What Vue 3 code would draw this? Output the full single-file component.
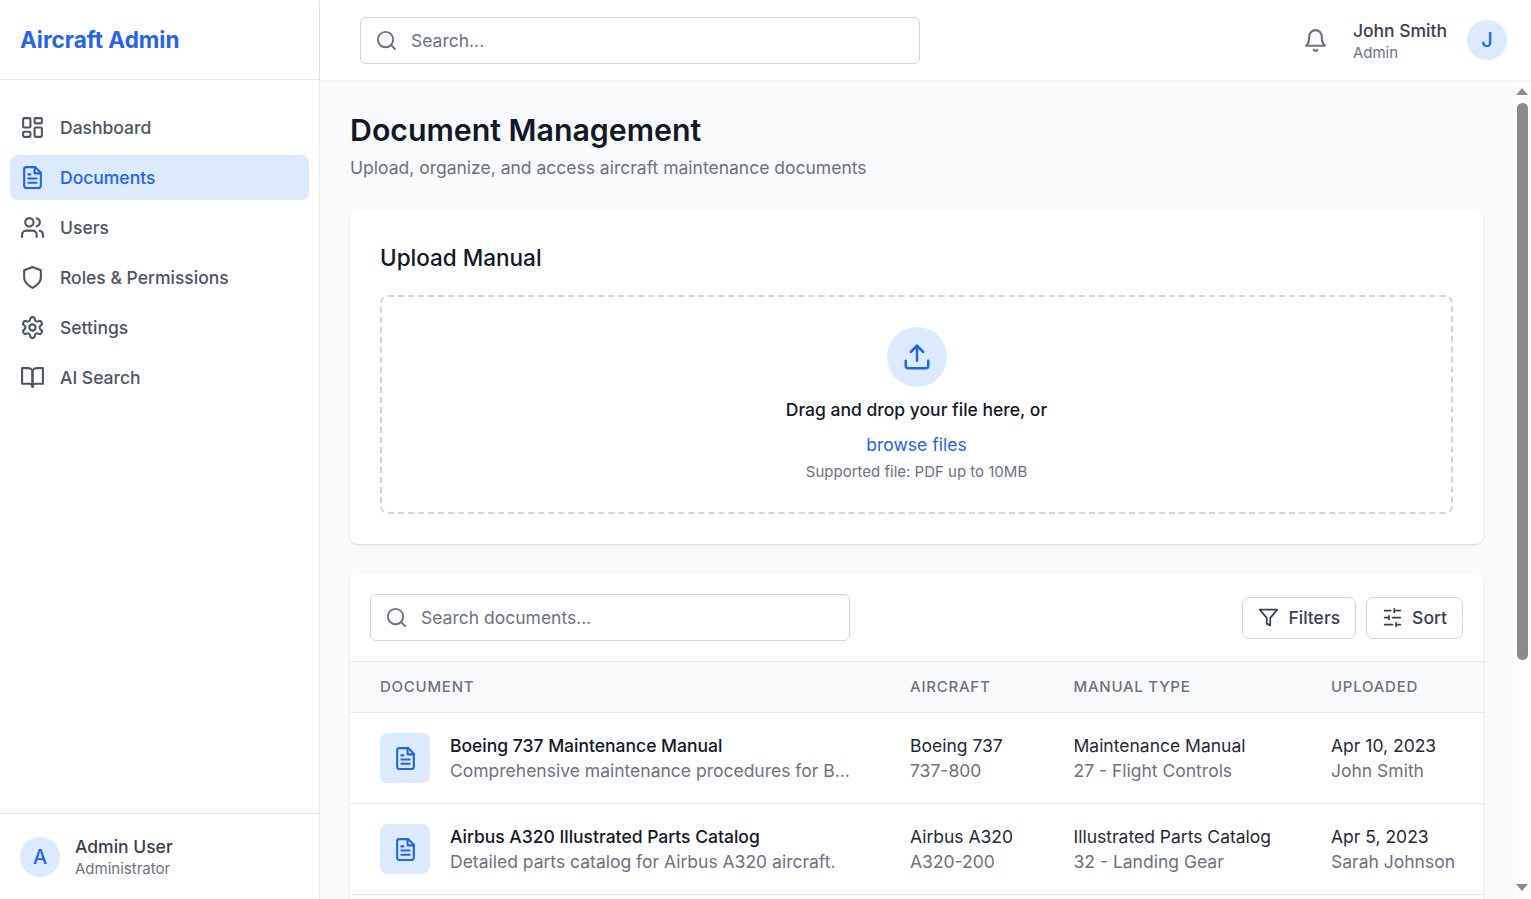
<script setup>
const nav = [
  { label: 'Dashboard', icon: 'dash' },
  { label: 'Documents', icon: 'file', active: true },
  { label: 'Users', icon: 'users' },
  { label: 'Roles & Permissions', icon: 'shield' },
  { label: 'Settings', icon: 'gear' },
  { label: 'AI Search', icon: 'book' },
]
const docs = [
  { t: 'Boeing 737 Maintenance Manual', d: 'Comprehensive maintenance procedures for Boeing 737-800 aircraft.', a: 'Boeing 737', m: '737-800', k: 'Maintenance Manual', c: '27 - Flight Controls', u: 'Apr 10, 2023', b: 'John Smith' },
  { t: 'Airbus A320 Illustrated Parts Catalog', d: 'Detailed parts catalog for Airbus A320 aircraft.', a: 'Airbus A320', m: 'A320-200', k: 'Illustrated Parts Catalog', c: '32 - Landing Gear', u: 'Apr 5, 2023', b: 'Sarah Johnson' },
  { t: 'Boeing 777 Wiring Diagram Manual', d: 'Electrical wiring diagrams for Boeing 777.', a: 'Boeing 777', m: '777-300ER', k: 'Wiring Diagram', c: '24 - Electrical Power', u: 'Mar 28, 2023', b: 'Mike Davis' },
]
</script>

<template>
  <div class="app">
    <aside class="sidebar">
      <div class="brand">Aircraft Admin</div>
      <nav class="nav">
        <a v-for="n in nav" :key="n.label" class="nav-item" :class="{ active: n.active }">
          <svg class="ico" viewBox="0 0 24 24">
            <template v-if="n.icon === 'dash'">
              <rect x="3" y="3" width="7" height="9" rx="1" /><rect x="14" y="3" width="7" height="5" rx="1" /><rect x="14" y="12" width="7" height="9" rx="1" /><rect x="3" y="16" width="7" height="5" rx="1" />
            </template>
            <template v-else-if="n.icon === 'file'">
              <path d="M14.5 2H6a2 2 0 0 0-2 2v16a2 2 0 0 0 2 2h12a2 2 0 0 0 2-2V7.5L14.5 2z" /><path d="M14 2v6h6" /><path d="M16 13H8M16 17H8M10 9H8" />
            </template>
            <template v-else-if="n.icon === 'users'">
              <path d="M16 21v-2a4 4 0 0 0-4-4H6a4 4 0 0 0-4 4v2" /><circle cx="9" cy="7" r="4" /><path d="M22 21v-2a4 4 0 0 0-3-3.87" /><path d="M16 3.13a4 4 0 0 1 0 7.75" />
            </template>
            <template v-else-if="n.icon === 'shield'">
              <path d="M12 22s8-4 8-10V5l-8-3-8 3v7c0 6 8 10 8 10z" />
            </template>
            <template v-else-if="n.icon === 'gear'">
              <path d="M12.22 2h-.44a2 2 0 0 0-2 2v.18a2 2 0 0 1-1 1.73l-.43.25a2 2 0 0 1-2 0l-.15-.08a2 2 0 0 0-2.73.73l-.22.38a2 2 0 0 0 .73 2.73l.15.1a2 2 0 0 1 1 1.72v.51a2 2 0 0 1-1 1.74l-.15.09a2 2 0 0 0-.73 2.73l.22.38a2 2 0 0 0 2.73.73l.15-.08a2 2 0 0 1 2 0l.43.25a2 2 0 0 1 1 1.73V20a2 2 0 0 0 2 2h.44a2 2 0 0 0 2-2v-.18a2 2 0 0 1 1-1.73l.43-.25a2 2 0 0 1 2 0l.15.08a2 2 0 0 0 2.73-.73l.22-.39a2 2 0 0 0-.73-2.73l-.15-.08a2 2 0 0 1-1-1.74v-.5a2 2 0 0 1 1-1.74l.15-.09a2 2 0 0 0 .73-2.73l-.22-.38a2 2 0 0 0-2.73-.73l-.15.08a2 2 0 0 1-2 0l-.43-.25a2 2 0 0 1-1-1.73V4a2 2 0 0 0-2-2z" /><circle cx="12" cy="12" r="3" />
            </template>
            <template v-else>
              <path d="M2 3h6a4 4 0 0 1 4 4v14a3 3 0 0 0-3-3H2z" /><path d="M22 3h-6a4 4 0 0 0-4 4v14a3 3 0 0 1 3-3h7z" />
            </template>
          </svg>
          <span>{{ n.label }}</span>
        </a>
      </nav>
      <div class="side-user">
        <div class="avatar">A</div>
        <div>
          <div class="su-name">Admin User</div>
          <div class="su-role">Administrator</div>
        </div>
      </div>
    </aside>

    <div class="right">
      <header class="topbar">
        <div class="search top-search">
          <svg class="ico search-ico" viewBox="0 0 24 24"><circle cx="11" cy="11" r="8" /><path d="m21 21-4.3-4.3" /></svg>
          <span>Search...</span>
        </div>
        <div class="top-right">
          <svg class="ico bell" viewBox="0 0 24 24"><path d="M6 8a6 6 0 0 1 12 0c0 7 3 9 3 9H3s3-2 3-9" /><path d="M10.3 21a1.94 1.94 0 0 0 3.4 0" /></svg>
          <div class="tu">
            <div class="tu-name">John Smith</div>
            <div class="tu-role">Admin</div>
          </div>
          <div class="avatar">J</div>
        </div>
      </header>

      <div class="body">
        <main class="main">
          <h1 class="title">Document Management</h1>
          <p class="sub">Upload, organize, and access aircraft maintenance documents</p>

          <section class="card upload">
            <h2 class="up-title">Upload Manual</h2>
            <div class="drop">
              <div class="up-circle">
                <svg class="ico up-ico" viewBox="0 0 24 24"><path d="M21 15v4a2 2 0 0 1-2 2H5a2 2 0 0 1-2-2v-4" /><path d="M17 8l-5-5-5 5" /><path d="M12 3v12" /></svg>
              </div>
              <div class="drag">Drag and drop your file here, or</div>
              <div class="browse">browse files</div>
              <div class="support">Supported file: PDF up to 10MB</div>
            </div>
          </section>

          <section class="card list">
            <div class="toolbar">
              <div class="search doc-search">
                <svg class="ico search-ico" viewBox="0 0 24 24"><circle cx="11" cy="11" r="8" /><path d="m21 21-4.3-4.3" /></svg>
                <span>Search documents...</span>
              </div>
              <div class="actions">
                <button class="btn">
                  <svg class="ico" viewBox="0 0 24 24"><path d="M22 3H2l8 9.46V19l4 2v-8.54L22 3z" /></svg>
                  Filters
                </button>
                <button class="btn">
                  <svg class="ico" viewBox="0 0 24 24"><path d="M21 4h-7M10 4H3M21 12h-9M8 12H3M21 20h-5M12 20H3M14 2v4M8 10v4M16 18v4" /></svg>
                  Sort
                </button>
              </div>
            </div>
            <table class="table">
              <thead>
                <tr>
                  <th class="c1">Document</th>
                  <th class="c2">Aircraft</th>
                  <th class="c3">Manual Type</th>
                  <th class="c4">Uploaded</th>
                </tr>
              </thead>
              <tbody>
                <tr v-for="d in docs" :key="d.t">
                  <td class="c1">
                    <div class="doc">
                      <div class="doc-ico">
                        <svg class="ico" viewBox="0 0 24 24"><path d="M14.5 2H6a2 2 0 0 0-2 2v16a2 2 0 0 0 2 2h12a2 2 0 0 0 2-2V7.5L14.5 2z" /><path d="M14 2v6h6" /><path d="M16 13H8M16 17H8M10 9H8" /></svg>
                      </div>
                      <div class="doc-text">
                        <div class="strong">{{ d.t }}</div>
                        <div class="muted ell">{{ d.d }}</div>
                      </div>
                    </div>
                  </td>
                  <td class="c2"><div class="dark">{{ d.a }}</div><div class="muted">{{ d.m }}</div></td>
                  <td class="c3"><div class="dark">{{ d.k }}</div><div class="muted">{{ d.c }}</div></td>
                  <td class="c4"><div class="dark">{{ d.u }}</div><div class="muted">{{ d.b }}</div></td>
                </tr>
              </tbody>
            </table>
          </section>
        </main>
        <div class="scrollbar" aria-hidden="true">
          <div class="arrow up"></div>
          <div class="thumb"></div>
          <div class="arrow down"></div>
        </div>
      </div>
    </div>
  </div>
</template>

<style>
html, body { margin: 0; height: 100%; overflow: hidden; }
</style>

<style scoped>
* { box-sizing: border-box; }
.app { display: flex; height: 899px; font-family: Inter, "Noto Sans", sans-serif; font-size: 17.5px; color: #111827; background: #f9fafb; }
.sidebar { width: 320px; flex: none; background: #fff; border-right: 1px solid #e5e7eb; display: flex; flex-direction: column; }
.brand { height: 80px; flex: none; border-bottom: 1px solid #e5e7eb; padding-left: 20px; display: flex; align-items: center; font-size: 22.5px; font-weight: 700; color: #2563eb; }
.nav { flex: 1; padding: 25px 10px 0; display: flex; flex-direction: column; gap: 5px; }
.nav-item { height: 45px; border-radius: 8px; padding-left: 10px; display: flex; align-items: center; gap: 15px; color: #4b5563; font-weight: 500; }
.nav-item.active { background: #dbeafe; color: #2563eb; }
.ico { width: 25px; height: 25px; flex: none; fill: none; stroke: currentColor; stroke-width: 2; stroke-linecap: round; stroke-linejoin: round; }
.side-user { height: 86px; flex: none; border-top: 1px solid #e5e7eb; display: flex; align-items: center; gap: 15px; padding-left: 20px; }
.avatar { width: 40px; height: 40px; flex: none; border-radius: 50%; background: #dbeafe; color: #2563eb; display: flex; align-items: center; justify-content: center; font-weight: 500; font-size: 20px; }
.su-name, .tu-name { font-size: 17.5px; font-weight: 500; color: #374151; line-height: 23px; }
.su-role, .tu-role { font-size: 15px; color: #6b7280; line-height: 21px; }
.right { flex: 1; min-width: 0; display: flex; flex-direction: column; }
.topbar { height: 80px; flex: none; background: #fff; display: flex; align-items: center; justify-content: space-between; padding: 0 24px 0 40px; box-shadow: 0 1px 2px rgba(0, 0, 0, 0.05); position: relative; z-index: 1; }
.search { display: flex; align-items: center; gap: 13px; height: 47px; padding-left: 14px; border: 1px solid #d1d5db; border-radius: 6px; background: #fff; color: #6b7280; }
.top-search { width: 560px; }
.doc-search { width: 480px; }
.search-ico { width: 23px; height: 23px; color: #6b7280; }
.top-right { display: flex; align-items: center; }
.bell { color: #6b7280; margin-right: 25px; }
.tu { margin-right: 20px; padding-top: 2px; }
.tu .tu-role { line-height: 22px; }
.body { flex: 1; min-height: 0; display: flex; }
.main { flex: 1; min-width: 0; overflow: hidden; padding: 31px 30px 30px; }
.title { margin: 0; font-size: 30.3px; font-weight: 600; line-height: 39px; color: #111827; }
.sub { margin: 4px 0 0; color: #6b7280; line-height: 27px; }
.card { background: #fff; border-radius: 8px; box-shadow: 0 1px 3px rgba(0, 0, 0, 0.1), 0 1px 2px rgba(0, 0, 0, 0.06); }
.upload { margin-top: 29px; padding: 30px; }
.up-title { margin: 0 0 20px; font-size: 22.5px; font-weight: 500; line-height: 35px; color: #111827; }
.drop { height: 219px; border: 2px dashed #d1d5db; border-radius: 8px; display: flex; flex-direction: column; align-items: center; padding-top: 30px; }
.up-circle { width: 60px; height: 60px; border-radius: 50%; background: #dbeafe; display: flex; align-items: center; justify-content: center; color: #2563eb; }
.up-ico { width: 30px; height: 30px; }
.drag { margin-top: 9px; font-weight: 500; line-height: 27px; }
.browse { margin-top: 8px; color: #2563eb; line-height: 27px; }
.support { font-size: 15px; color: #6b7280; line-height: 27px; }
.list { margin-top: 30px; overflow: hidden; }
.toolbar { height: 87px; display: flex; align-items: center; justify-content: space-between; padding: 0 20px; }
.actions { display: flex; gap: 10px; }
.btn { height: 42px; padding: 0 15px; display: flex; align-items: center; gap: 9px; border: 1px solid #d1d5db; border-radius: 7px; background: #fff; font: 500 17.5px Inter, sans-serif; color: #374151; }
.btn .ico { width: 21px; height: 21px; }
.table { width: 100%; border-collapse: collapse; table-layout: fixed; }
th { height: 51px; text-align: left; padding: 0 0 2px; background: #f9fafb; font-size: 15px; font-weight: 500; letter-spacing: 0.75px; text-transform: uppercase; color: #6b7280; border-top: 1px solid #e5e7eb; border-bottom: 1px solid #e5e7eb; }
th.c1 { padding-left: 30px; }
td { height: 91px; padding: 0; border-bottom: 1px solid #e5e7eb; vertical-align: middle; line-height: 25px; }
.c1 { width: 560px; padding-left: 30px; }
.c2 { width: 163.5px; }
.c3 { width: 257.5px; }
.doc { display: flex; align-items: center; gap: 20px; }
.doc-ico { width: 50px; height: 50px; flex: none; border-radius: 8px; background: #dbeafe; color: #2563eb; display: flex; align-items: center; justify-content: center; }
.doc-text { min-width: 0; max-width: 400px; }
.strong { font-weight: 500; color: #111827; white-space: nowrap; }
.dark { color: #1f2937; white-space: nowrap; }
.muted { color: #6b7280; white-space: nowrap; }
.ell { overflow: hidden; text-overflow: ellipsis; }
.scrollbar { width: 18px; flex: none; background: #fdfdfd; display: flex; flex-direction: column; align-items: center; padding: 8px 0 8px; }
.arrow { width: 0; height: 0; border-left: 6.5px solid transparent; border-right: 6.5px solid transparent; flex: none; }
.arrow.up { border-bottom: 7px solid #8a8a8a; }
.arrow.down { border-top: 7px solid #8a8a8a; margin-top: auto; }
.thumb { width: 11px; height: 557px; flex: none; margin-top: 8px; border-radius: 6px; background: #8a8a8a; }
</style>
